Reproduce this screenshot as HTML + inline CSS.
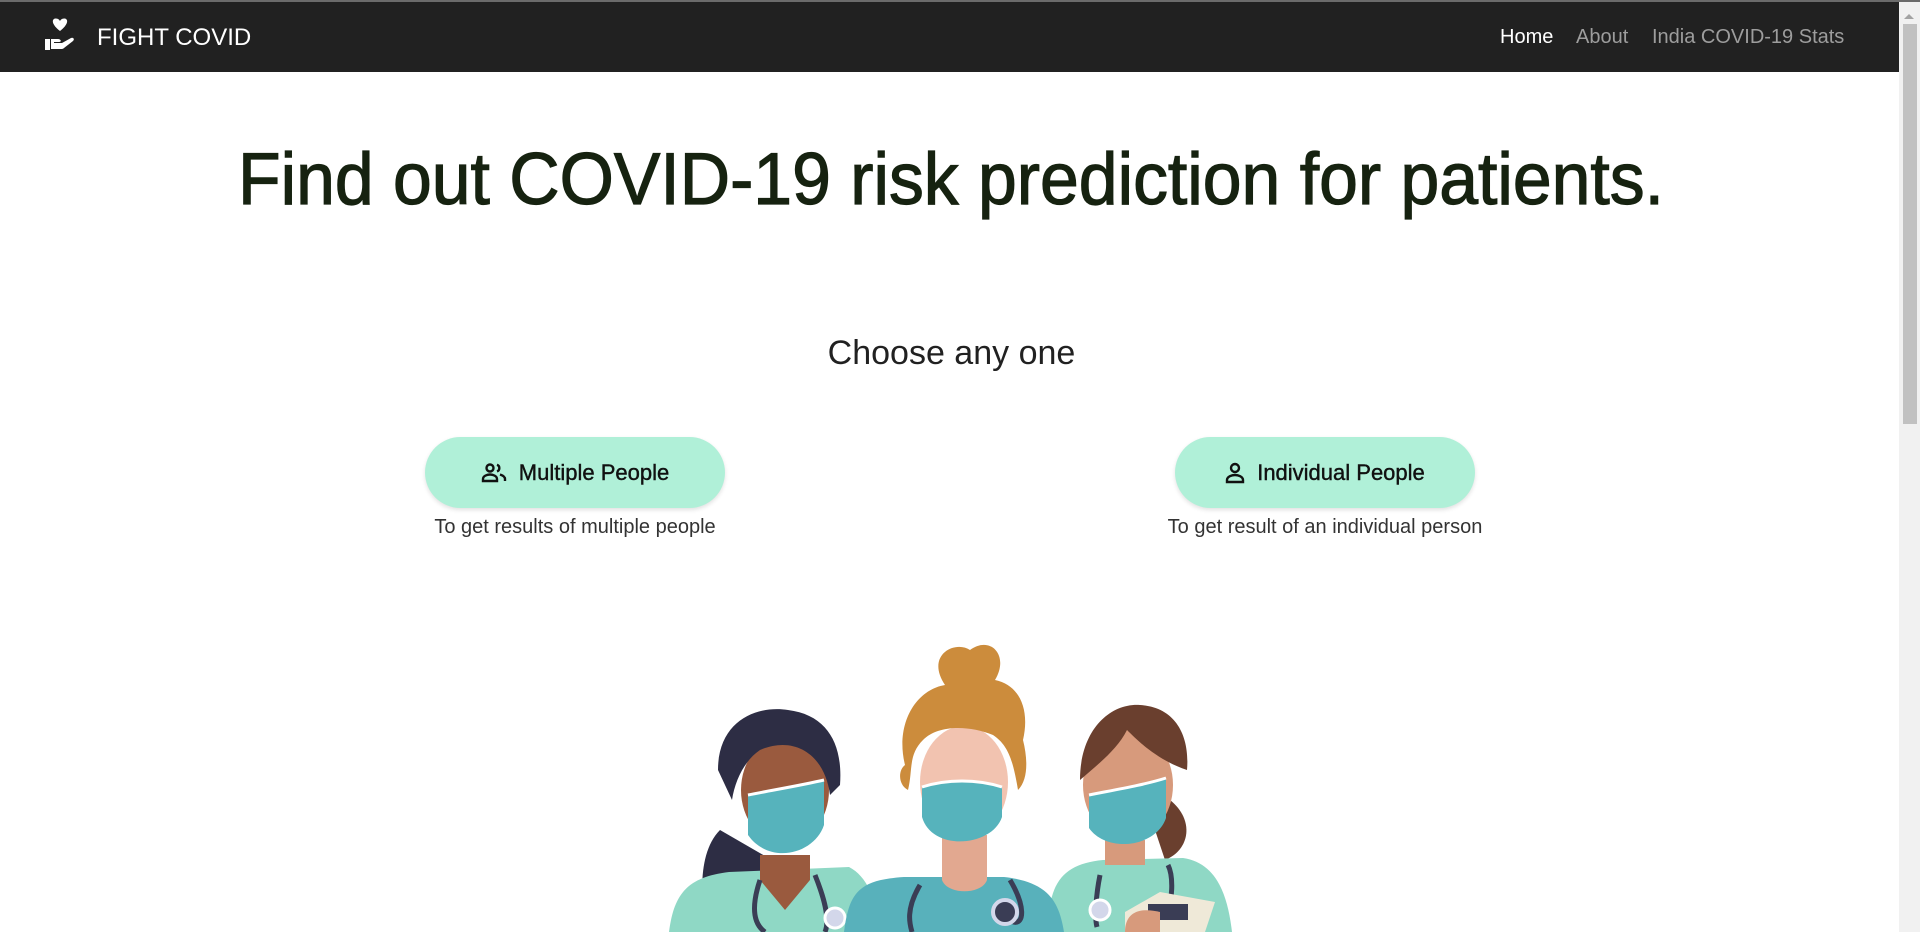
<!DOCTYPE html>
<html><head><meta charset="utf-8">
<style>
html,body{margin:0;padding:0;width:1920px;height:932px;overflow:hidden;background:#fff;font-family:"Liberation Sans",sans-serif;}
.top{position:absolute;left:0;top:0;width:1920px;height:2px;background:#6b6b6b;}
.nav{position:absolute;left:0;top:2px;width:1899px;height:70px;background:#212121;}
.brand{position:absolute;left:97px;top:22px;color:#fff;font-size:24px;}
.link{position:absolute;top:24px;font-size:20px;color:#9d9d9d;}
.sb{position:absolute;left:1899px;top:2px;width:21px;height:930px;background:#f1f1f1;}
.thumb{position:absolute;left:1903px;top:24px;width:14px;height:400px;background:#c1c1c1;}
.h2{position:absolute;left:0;width:1903px;text-align:center;top:334px;font-size:34px;color:#212121;}
.btn{position:absolute;top:437px;width:300px;height:71px;border-radius:36px;background:#b0f0d8;box-shadow:0 2px 4px rgba(0,0,0,.12);font-size:22px;color:#111;display:flex;align-items:center;justify-content:center;gap:12px;-webkit-text-stroke:0.4px #111;}
.cap{position:absolute;top:516px;font-size:20px;color:#333;text-align:center;}
</style></head><body>
<div class="top"></div>
<div class="nav">
<svg style="position:absolute;left:44px;top:15px" width="32" height="34" viewBox="0 0 32 34">
<path d="M16 14 C8 8 7 2 11.5 1.5 C14 1.3 15.5 3 16 4 C16.5 3 18 1.3 20.5 1.5 C25 2 24 8 16 14Z" fill="#fff"/>
<path d="M1 22 h5 v11 h-5z" fill="#fff"/>
<path d="M7 22 h7 c3 0 4 3 1 3 h-5 v1 h8 l9-5 c2-1 4 1 2 3 l-9 7 c-1 1-2 1-3 1 h-10z" fill="#fff"/>
</svg>
<div class="brand">FIGHT COVID</div>
<div class="link" style="left:1500px;color:#fff">Home</div>
<div class="link" style="left:1576px">About</div>
<div class="link" style="left:1652px">India COVID-19 Stats</div>
</div>
<div class="sb"><div style="position:absolute;left:5px;top:12px;border-left:5px solid transparent;border-right:5px solid transparent;border-bottom:5px solid #a3a3a3"></div></div>
<div class="thumb"></div>
<svg style="position:absolute;left:0;top:130px" width="1903" height="100">
<text x="951" y="74" text-anchor="middle" textLength="1426" lengthAdjust="spacingAndGlyphs" font-family="Liberation Sans, sans-serif" font-size="73" fill="#162210" stroke="#162210" stroke-width="1.2">Find out COVID-19 risk prediction for patients.</text>
</svg>
<div class="h2">Choose any one</div>
<div class="btn" style="left:425px">
<svg width="26" height="20" viewBox="0 0 26 20"><circle cx="9" cy="5" r="3.5" fill="none" stroke="#111" stroke-width="2.4"/><path d="M2 18 v-2 c0-3 4-4.5 7-4.5 s7 1.5 7 4.5 v2z" fill="none" stroke="#111" stroke-width="2.4"/><path d="M16 1.8 a3.5 3.5 0 0 1 0 6.6 M19 11.5 c2.5 .8 5 2 5 4.5 v2" fill="none" stroke="#111" stroke-width="2.4"/></svg>
<span>Multiple People</span></div>
<div class="btn" style="left:1175px">
<svg width="20" height="22" viewBox="0 0 20 22"><circle cx="10" cy="6" r="4" fill="none" stroke="#111" stroke-width="2.4"/><path d="M2 20 v-2 c0-3.5 5-5 8-5 s8 1.5 8 5 v2z" fill="none" stroke="#111" stroke-width="2.4"/></svg>
<span>Individual People</span></div>
<div class="cap" style="left:405px;width:340px">To get results of multiple people</div>
<div class="cap" style="left:1125px;width:400px">To get result of an individual person</div>

<svg style="position:absolute;left:0;top:0" width="1900" height="932">
<!-- left nurse -->
<path d="M720 830 c-20 20 -20 60 -15 86 l40 0 l20-60z" fill="#2d2d44"/>
<path d="M669 932 c5-40 20-55 60-60 l120 -5 c20 10 30 40 30 65z" fill="#8fd8c5"/>
<path d="M760 855 h50 v25 l-25 30 l-25-30z" fill="#9a5a3e"/>
<ellipse cx="785" cy="790" rx="44" ry="54" fill="#9a5a3e"/>
<path d="M718 770 c0-50 40-65 70-60 c40 5 55 35 52 75 l-10 10 c-5-40-35-60-70-45 c-15 10-25 30-28 50z" fill="#2d2d44"/>
<path d="M748 795 c25-5 55-10 76-15 l0 45 c-10 30-55 40-76 10z" fill="#56b3bc"/>
<path d="M748 795 c25-5 55-10 76-15" stroke="#fff" stroke-width="3" fill="none"/>
<path d="M760 880 c-10 30-5 45 5 52 M815 875 c10 25 15 45 10 57" stroke="#3a3d55" stroke-width="5" fill="none"/>
<circle cx="835" cy="918" r="10" fill="#d3d7ea" stroke="#fff" stroke-width="3"/>
<!-- right nurse -->
<path d="M1170 800 c25 20 20 50 -5 60 l-10-30z" fill="#6a3f2e"/>
<path d="M1048 932 c0-50 15-68 55-72 l80-2 c35 5 45 40 49 74z" fill="#8fd8c5"/>
<path d="M1105 840 h40 v25 h-40z" fill="#d79a7c"/>
<ellipse cx="1128" cy="785" rx="45" ry="55" fill="#d79a7c"/>
<path d="M1080 780 c0-50 30-77 60-75 c35 2 50 30 47 65 c-30 -10 -50-30 -60-40 c-10 20-30 35-47 50z" fill="#6a3f2e"/>
<path d="M1089 795 c25-5 55-10 77-17 l0 40 c-10 30-60 35-77 10z" fill="#56b3bc"/>
<path d="M1089 795 c25-5 55-10 77-17" stroke="#fff" stroke-width="3" fill="none"/>
<path d="M1100 875 c-5 25-5 45 -3 52 M1168 865 c5 10 5 30 0 45" stroke="#3a3d55" stroke-width="5" fill="none"/>
<circle cx="1100" cy="910" r="10" fill="#d3d7ea" stroke="#fff" stroke-width="3"/>
<path d="M1125 912 l35-20 l55 10 l-10 30 h-80z" fill="#efe9d8"/>
<rect x="1148" y="904" width="40" height="16" fill="#3a3d55"/>
<path d="M1125 932 c0-20 15-25 35-20 v20z" fill="#d79a7c"/>
<!-- center nurse -->
<path d="M844 932 c5-40 15-52 60-55 l100 0 c45 5 55 25 60 55z" fill="#58b1bb"/>
<path d="M942 835 h45 v45 c-5 15-40 15-45 0z" fill="#e2a890"/>
<ellipse cx="964" cy="782" rx="44" ry="56" fill="#f2c3b0"/>
<path d="M905 765 c-10-40 10-75 40-80 c-20-30 10-45 25-35 c20-15 40 5 25 30 c25 5 35 30 28 60 c5 20 5 40-5 50 c-5-30-10-45-25-55 c-25-10-55-10-70 5 c-15 15-10 30-15 50 c-10-5-10-20-3-25z" fill="#cc8c3c"/>
<path d="M922 787 c25-8 55-8 80 0 l0 30 c-10 30-70 35-80 0z" fill="#56b3bc"/>
<path d="M922 787 c25-8 55-8 80 0" stroke="#fff" stroke-width="3" fill="none"/>
<path d="M920 885 c-15 25-10 40 -8 47 M1010 880 c15 25 15 45 3 42" stroke="#3a3d55" stroke-width="5" fill="none"/>
<circle cx="1005" cy="912" r="12" fill="#3a3d55" stroke="#d3d7ea" stroke-width="4"/>
</svg>
</body></html>
